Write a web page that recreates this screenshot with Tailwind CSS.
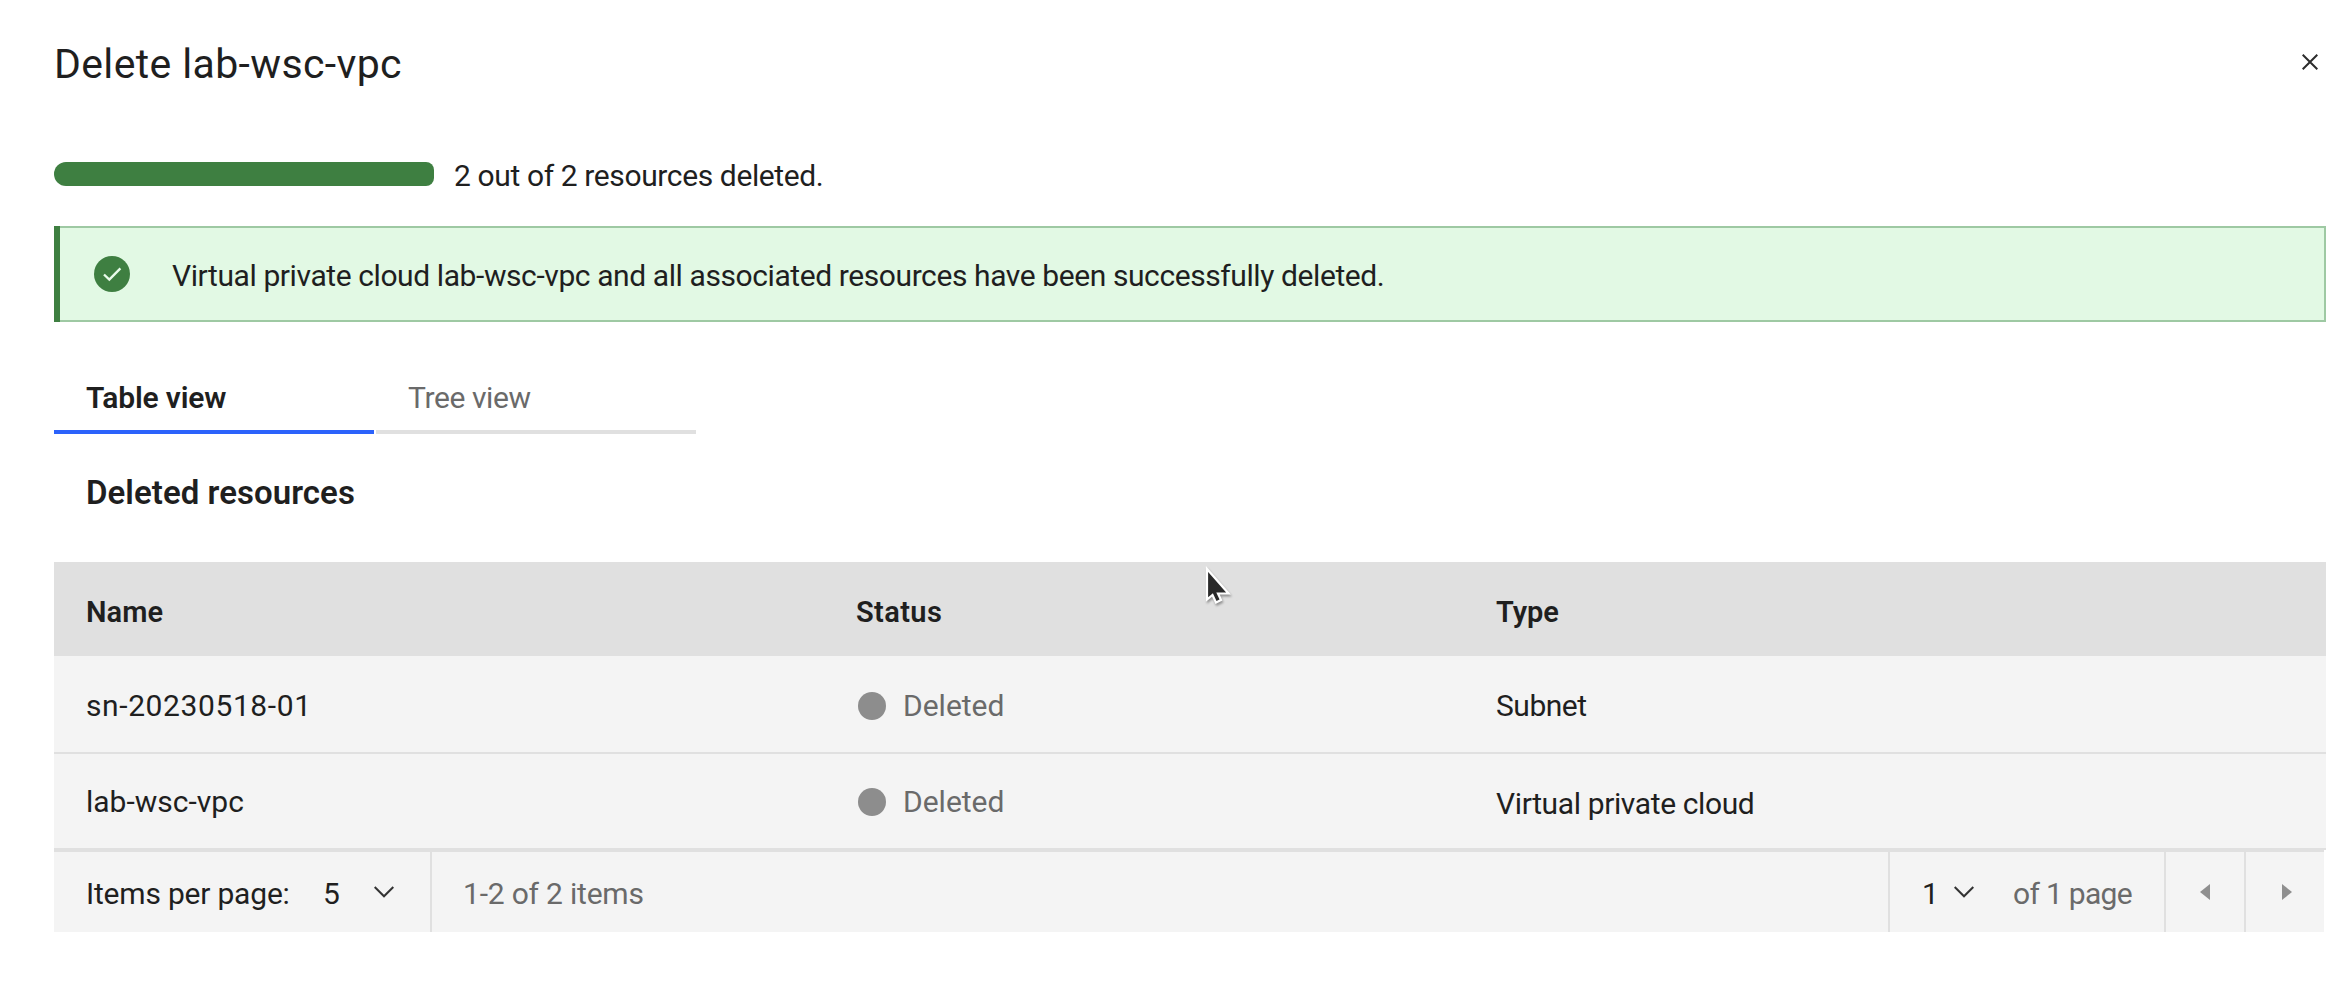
<!DOCTYPE html>
<html lang="en">
<head>
<meta charset="utf-8">
<title>Delete lab-wsc-vpc</title>
<script src="https://cdn.jsdelivr.net/npm/@tailwindcss/browser@4"></script>
</head>
<body class="w-[2352px] h-[994px] overflow-hidden bg-white text-[#1f1f1f] text-[30px] leading-10 whitespace-nowrap font-['Roboto','Liberation_Sans',sans-serif]">
<main class="relative pl-[54px] pr-[26px] pt-10">
  <header class="flex justify-between pr-2">
    <h1 class="text-[41px] leading-12 tracking-[0.36px]">Delete lab-wsc-vpc</h1>
    <button class="mt-3.5 h-4 w-4" aria-label="Close">
      <svg class="block" width="16" height="16" viewBox="0 0 16 16" fill="none" stroke="#2c2c2c" stroke-width="2"><path d="M.7 .7 15.3 15.3M15.3 .7.7 15.3"/></svg>
    </button>
  </header>

  <div class="mt-[68px] flex h-10 items-start">
    <div class="mt-1.5 h-6 w-[380px] rounded-l-xl rounded-r-lg bg-[#3e7f41]"></div>
    <p class="ml-5 tracking-[-0.38px]">2 out of 2 resources deleted.</p>
  </div>

  <section class="mt-[30px] flex h-24 border-2 border-l-0 border-[#9ec9a3] bg-[#e2f9e4]">
    <div class="-my-0.5 w-1.5 bg-[#3e7f41]"></div>
    <svg class="mt-7 ml-[34px] shrink-0" width="36" height="36" viewBox="0 0 36 36"><circle cx="18" cy="18" r="18" fill="#3e7f41"/><path d="M10 18.5l5.3 5L26.4 12.4" fill="none" stroke="#e8fbea" stroke-width="2.4"/></svg>
    <p class="mt-7 ml-[42px] tracking-[-0.41px]">Virtual private cloud lab-wsc-vpc and all associated resources have been successfully deleted.</p>
  </section>

  <nav class="mt-14 flex gap-0.5">
    <a class="h-14 w-80 border-b-4 border-[#2b62fb] pl-8 font-semibold tracking-[-0.15px]">Table view</a>
    <a class="h-14 w-80 border-b-4 border-[#e0e0e0] pl-8 tracking-[-0.4px] text-[#6a6a6a]">Tree view</a>
  </nav>

  <h2 class="mt-[39px] mb-[49px] pl-8 text-[33px] font-semibold tracking-[0.05px]">Deleted resources</h2>

  <section class="bg-[#f4f4f4]">
    <div class="grid h-[94px] grid-cols-[770px_640px_1fr] bg-[#e0e0e0] pt-[30px] pl-8 text-[29px] font-semibold">
      <div class="tracking-[0.1px]">Name</div>
      <div class="tracking-[0.4px]">Status</div>
      <div class="tracking-[-0.1px]">Type</div>
    </div>
    <div class="grid h-24 grid-cols-[770px_640px_1fr] pt-[30px] pl-8">
      <div class="tracking-[0.6px]">sn-20230518-01</div>
      <div class="flex items-start pl-0.5 text-[#6a6a6a]"><span class="mt-1.5 mr-[17px] h-7 w-7 rounded-full bg-[#8d8d8d]"></span>Deleted</div>
      <div class="tracking-[-0.48px]">Subnet</div>
    </div>
    <div class="grid h-24 grid-cols-[770px_640px_1fr] border-t-2 border-[#e0e0e0] pt-7 pl-8">
      <div>lab-wsc-vpc</div>
      <div class="flex items-start pl-0.5 text-[#6a6a6a]"><span class="mt-1.5 mr-[17px] h-7 w-7 rounded-full bg-[#8d8d8d]"></span>Deleted</div>
      <div class="pt-0.5 tracking-[-0.38px]">Virtual private cloud</div>
    </div>
    <div class="h-0.5 bg-[#e0e0e0]"></div>
  </section>

  <footer class="mr-0.5 flex h-[82px] border-t-2 border-[#e0e0e0] bg-[#f4f4f4]">
    <div class="flex w-[378px] border-r-2 border-[#e0e0e0] pt-[22px] pl-8">
      <span class="w-[237px] tracking-[-0.2px]">Items per page:</span>
      <span class="w-[51px]">5</span>
      <svg class="mt-3" width="20" height="12" viewBox="0 0 20 12" fill="none" stroke="#333" stroke-width="2"><path d="M.7 1 10 10.3 19.3 1"/></svg>
    </div>
    <div class="flex-1 pt-[22px] pl-[31px] tracking-[-0.2px] text-[#6a6a6a]">1-2 of 2 items</div>
    <div class="flex w-[278px] border-x-2 border-[#e0e0e0] pt-[22px] pl-8">
      <span class="w-8">1</span>
      <svg class="mt-3" width="20" height="12" viewBox="0 0 20 12" fill="none" stroke="#333" stroke-width="2"><path d="M.7 1 10 10.3 19.3 1"/></svg>
      <span class="ml-[39px] tracking-[-0.7px] text-[#6a6a6a]">of 1 page</span>
    </div>
    <button class="w-20 border-r-2 border-[#e0e0e0] pl-[34px]" aria-label="Previous page"><svg width="10" height="16" viewBox="0 0 10 16"><path d="M10 0v16L0 8z" fill="#8f8f8f"/></svg></button>
    <button class="w-[78px] pl-9" aria-label="Next page"><svg width="10" height="16" viewBox="0 0 10 16"><path d="M0 0v16l10-8z" fill="#8f8f8f"/></svg></button>
  </footer>

  <svg class="absolute top-[564px] left-[1202px] drop-shadow-[1px_2px_1px_rgba(0,0,0,0.35)]" width="34" height="46" viewBox="0 0 34 46"><path d="M5 5v30.500l5.500-4.500 3.500 7.500 5-2.500-3-6.500H26.500z" fill="#2a2a2a" stroke="#fff" stroke-width="2.200"/></svg>
</main>
</body>
</html>
